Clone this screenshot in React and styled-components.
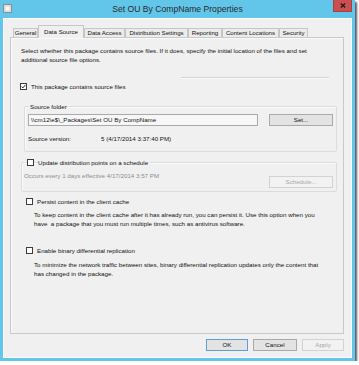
import React from 'react'
import styled, { createGlobalStyle } from 'styled-components'

const GlobalStyle = createGlobalStyle`
  html, body {
    margin: 0;
    padding: 0;
    background: #ffffff;
  }
  body {
    font-family: "Liberation Sans", Arial, sans-serif;
    color: #111111;
  }
`

const Window = styled.div`
  width: 355px;
  height: 361px;
  background: #62c6ea;
  display: flex;
  flex-direction: column;
  box-shadow: 2px 2px 2px rgba(0, 0, 0, 0.65);
`
const TitleBar = styled.div`
  height: 18px;
  display: grid;
  grid-template-columns: 1fr auto 1fr;
  align-items: start;
`
const AppIcon = styled.svg`
  margin: 4px 0 0 3px;
  display: block;
`
const Title = styled.div`
  font-size: 8.6px;
  line-height: 18px;
  color: #2a2a2a;
  white-space: nowrap;
`
const CloseButton = styled.div`
  justify-self: end;
  margin-right: 3px;
  width: 19px;
  height: 12px;
  box-sizing: border-box;
  background: #c9504f;
  border: 1px solid #a94140;
  border-top: none;
  display: flex;
  align-items: center;
  justify-content: center;
`
const Client = styled.div`
  flex: 1;
  margin: 0 3px 3px;
  background: #f0f0f0;
  box-shadow: inset 0 0 0 1px #fbfbfb;
  padding: 7px 8px 7px 7px;
  display: flex;
  flex-direction: column;
  min-height: 0;
`
const TabStrip = styled.div`
  height: 12px;
  display: flex;
  align-items: flex-end;
  padding-left: 3px;
`
const Tab = styled.div`
  position: relative;
  z-index: ${p => (p.active ? 1 : 0)};
  width: ${p => p.w}px;
  height: ${p => (p.active ? 13 : 9)}px;
  margin-bottom: ${p => (p.active ? -1 : 0)}px;
  box-sizing: border-box;
  border: 1px solid #c6c6c6;
  border-bottom: none;
  background: ${p => (p.active ? '#f0f0f0' : '#ececec')};
  font-size: 6.1px;
  line-height: ${p => (p.active ? 11 : 8)}px;
  text-align: center;
  white-space: nowrap;
  overflow: hidden;
`
const Panel = styled.div`
  flex: 1;
  border: 1px solid #c9c9c9;
  box-shadow: inset 1px 1px 0 #fafafa;
  padding: 8px 6px 0 10px;
  display: flex;
  flex-direction: column;
  font-size: 6.2px;
  line-height: 9px;
`
const Text = styled.div`
  white-space: nowrap;
  margin-top: ${p => p.mt || 0}px;
  margin-left: ${p => p.ml || 0}px;
  color: ${p => (p.muted ? '#8c8c8c' : '#111111')};
`
const Separator = styled.div`
  height: 1px;
  background: #d3d3d3;
  border-bottom: 1px solid #fbfbfb;
  margin: 13px 8px 0 ${p => p.ml}px;
`
const CheckRow = styled.label`
  display: flex;
  align-items: center;
  gap: 4px;
  height: 9px;
  margin-top: ${p => p.mt || 0}px;
  margin-left: ${p => p.ml || 0}px;
  white-space: nowrap;
  position: relative;
  z-index: 1;
`
const CheckLabel = styled.span`
  background: #f0f0f0;
  padding-right: 2px;
`
const Box = styled.span`
  width: 7px;
  height: 7px;
  box-sizing: border-box;
  border: 1px solid #3c3c3c;
  background: #ffffff;
  display: flex;
  align-items: center;
  justify-content: center;
  flex: none;
`
const Group = styled.div`
  margin-top: ${p => p.mt}px;
  margin-left: ${p => p.ml}px;
  width: ${p => p.w}px;
  box-sizing: border-box;
  border: 1px solid #dcdcdc;
  border-radius: 2px;
  box-shadow: inset 1px 1px 0 #fbfbfb;
  padding: ${p => p.pad};
  display: flex;
  flex-direction: column;
`
const Legend = styled.div`
  align-self: flex-start;
  margin: -5px 0 0 1px;
  padding: 0 1px;
  background: #f0f0f0;
  line-height: 9px;
`
const FieldRow = styled.div`
  display: flex;
  align-items: ${p => p.align || 'center'};
  margin-top: ${p => p.mt || 0}px;
`
const TextBox = styled.div`
  width: 230px;
  height: 12px;
  box-sizing: border-box;
  border: 1px solid #a9a9a9;
  background: #f7f7f7;
  padding-left: 2px;
  line-height: 10px;
  white-space: nowrap;
`
const Button = styled.div`
  width: ${p => p.w}px;
  height: 12px;
  box-sizing: border-box;
  margin-left: ${p => p.ml || 0}px;
  margin-top: ${p => p.mt || 0}px;
  border: 1px solid ${p => (p.primary ? '#5c9fd6' : p.disabled ? '#d2d2d2' : '#a9a9a9')};
  background: ${p => (p.disabled ? '#f2f2f2' : '#e3e3e3')};
  color: ${p => (p.disabled ? '#a6a6a6' : '#111111')};
  font-size: 6.2px;
  line-height: 10px;
  text-align: center;
  flex: none;
`
const FieldLabel = styled.span`
  width: ${p => p.w}px;
  flex: none;
`
const Spacer = styled.div`
  flex: 1;
`
const ButtonRow = styled.div`
  margin-top: 5px;
  display: flex;
  justify-content: flex-end;
  gap: 5px;
`

const tabs = [
  { title: 'General', w: 25 },
  { title: 'Data Source', w: 46, active: true },
  { title: 'Data Access', w: 41 },
  { title: 'Distribution Settings', w: 63 },
  { title: 'Reporting', w: 34 },
  { title: 'Content Locations', w: 57 },
  { title: 'Security', w: 29 },
]

const Check = ({ checked }) => (
  <Box>
    {checked && (
      <svg width="5" height="5" viewBox="0 0 5 5">
        <path d="M0.6 2.6 L1.9 3.9 L4.4 0.9" fill="none" stroke="#222" strokeWidth="1" />
      </svg>
    )}
  </Box>
)

export default function App() {
  return (
    <>
      <GlobalStyle />
      <Window>
        <TitleBar>
          <AppIcon width="9" height="9" viewBox="0 0 9 9">
            <rect x="0.5" y="0.5" width="8" height="8" fill="#e6e6e6" stroke="#8d8d8d" />
            <rect x="2" y="2" width="5" height="5" fill="#f8f8f8" stroke="#c4c4c4" strokeWidth="0.6" />
          </AppIcon>
          <Title>Set OU By CompName Properties</Title>
          <CloseButton>
            <svg width="6" height="5" viewBox="0 0 6 5">
              <path d="M0.8 0.6 L5.2 4.4 M5.2 0.6 L0.8 4.4" stroke="#2a1414" strokeWidth="1.3" />
            </svg>
          </CloseButton>
        </TitleBar>
        <Client>
          <TabStrip>
            {tabs.map(t => (
              <Tab key={t.title} w={t.w} active={t.active}>
                {t.title}
              </Tab>
            ))}
          </TabStrip>
          <Panel>
            <Text>Select whether this package contains source files. If it does, specify the initial location of the files and set</Text>
            <Text>additional source file options.</Text>
            <Separator ml={160} />
            <CheckRow mt={3} ml={-1}>
              <Check checked />
              <span>This package contains source files</span>
            </CheckRow>
            <Group mt={15} ml={3} w={313} pad="0 3px 8px 3px">
              <Legend>Source folder</Legend>
              <FieldRow mt={3}>
                <TextBox>\\cm12\e$\_Packages\Set OU By CompName</TextBox>
                <Button w={64} ml={11}>Set...</Button>
              </FieldRow>
              <FieldRow mt={8}>
                <FieldLabel w={73}>Source version:</FieldLabel>
                <span>5 (4/17/2014 3:37:40 PM)</span>
              </FieldRow>
            </Group>
            <Group mt={10} ml={0} w={316} pad="0 3px 3px 2px">
              <CheckRow mt={-5} ml={3}>
                <Check />
                <CheckLabel>Update distribution points on a schedule</CheckLabel>
              </CheckRow>
              <FieldRow mt={4} align="flex-start">
                <Text muted>Occurs every 1 days effective 4/17/2014 3:57 PM</Text>
                <Spacer />
                <Button w={64} mt={5} disabled>Schedule...</Button>
              </FieldRow>
            </Group>
            <CheckRow mt={5} ml={5}>
              <Check />
              <span>Persist content in the client cache</span>
            </CheckRow>
            <Text mt={4} ml={13}>To keep content in the client cache after it has already run, you can persist it. Use this option when you</Text>
            <Text ml={13}>have&nbsp; a package that you must run multiple times, such as antivirus software.</Text>
            <CheckRow mt={18} ml={5}>
              <Check />
              <span>Enable binary differential replication</span>
            </CheckRow>
            <Text mt={5} ml={13}>To minimize the network traffic between sites, binary differential replication updates only the content that</Text>
            <Text ml={13}>has changed in the package.</Text>
          </Panel>
          <ButtonRow>
            <Button w={42} primary>OK</Button>
            <Button w={44}>Cancel</Button>
            <Button w={42} disabled>Apply</Button>
          </ButtonRow>
        </Client>
      </Window>
    </>
  )
}
